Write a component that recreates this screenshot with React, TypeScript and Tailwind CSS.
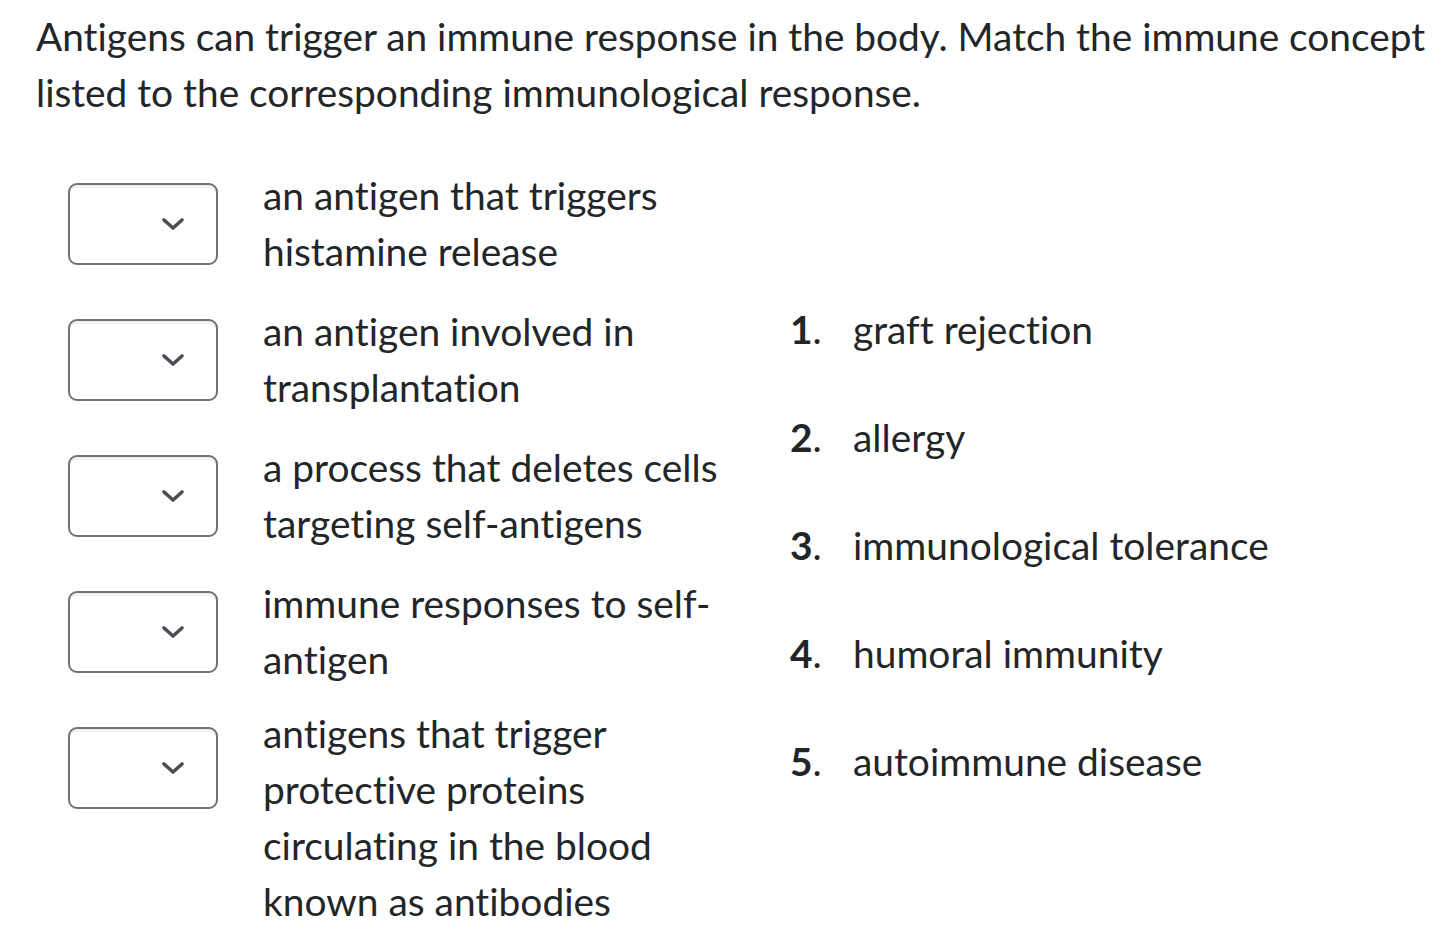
const prompts = [
  'an antigen that triggers histamine release',
  'an antigen involved in transplantation',
  'a process that deletes cells targeting self-antigens',
  'immune responses to self-antigen',
  'antigens that trigger protective proteins circulating in the blood known as antibodies',
];

const answers = [
  'graft rejection',
  'allergy',
  'immunological tolerance',
  'humoral immunity',
  'autoimmune disease',
];

function MatchSelect() {
  return (
    <div className="relative w-[150px] h-[82px] shrink-0 rounded-[9px] border-2 border-[#6f7479] bg-white shadow-[inset_0_3px_0_#eef0f2]">
      <svg
        className="absolute left-[91px] top-[32px]"
        width="24"
        height="14"
        viewBox="0 0 24 14"
        fill="none"
      >
        <path
          d="M3 3 L12 11 L21 3"
          stroke="#4a4f55"
          strokeWidth="3.6"
          strokeLinecap="round"
          strokeLinejoin="round"
        />
      </svg>
    </div>
  );
}

export default function App() {
  return (
    <div
      className="min-h-screen bg-white text-[#222629] pl-[36px] pt-[8px] [font-variant-ligatures:none]"
      style={{ fontFamily: 'Lato, "Noto Sans", sans-serif' }}
    >
      <p className="text-[38.85px] leading-[56px] pr-[20px]">
        Antigens can trigger an immune response in the body. Match the immune concept listed to the
        corresponding immunological response.
      </p>

      <div className="flex mt-[47px]">
        <div className="flex flex-col pl-[32px]">
          {prompts.map((text, i) => {
            const last = i === prompts.length - 1;
            return (
              <div
                key={text}
                className={last ? 'flex items-start gap-[45px] pt-[16px]' : 'flex items-start gap-[45px] h-[136px] pt-[16px]'}
              >
                <MatchSelect />
                <p
                  className={
                    last
                      ? 'w-[470px] -mt-[22px] text-[38.9px] leading-[56px]'
                      : 'w-[470px] -mt-[16px] text-[38.9px] leading-[56px]'
                  }
                >
                  {text}
                </p>
              </div>
            );
          })}
        </div>

        <ol className="flex flex-col gap-[52px] mt-[134px] ml-[57px]">
          {answers.map((text, i) => (
            <li key={text} className="flex text-[38.9px] leading-[56px]">
              <span className="w-[63px]">
                <span className="font-bold">{i + 1}</span>.
              </span>
              <span>{text}</span>
            </li>
          ))}
        </ol>
      </div>
    </div>
  );
}
